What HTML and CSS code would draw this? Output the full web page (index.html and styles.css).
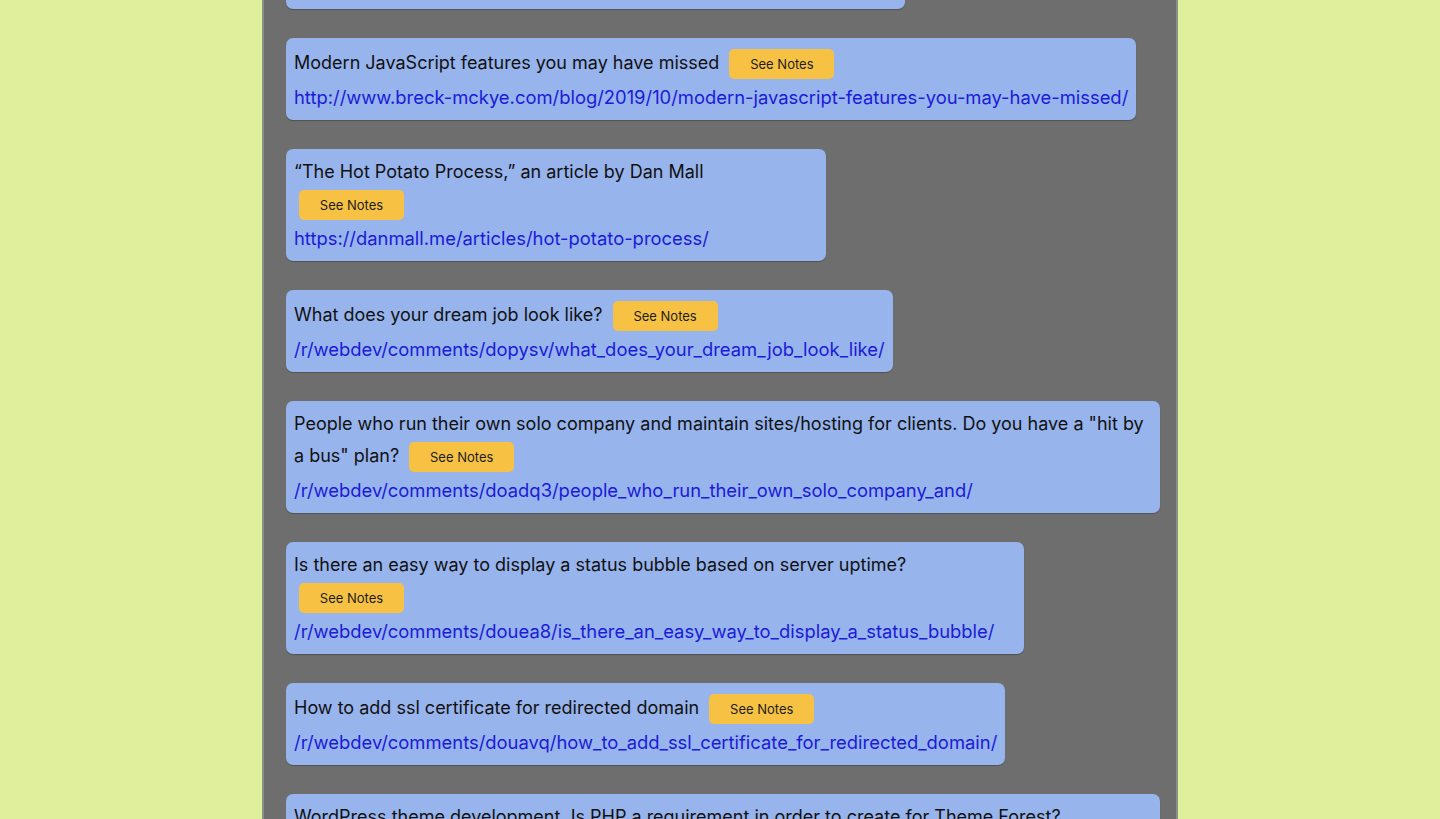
FILE: index.html
```html
<!DOCTYPE html>
<html lang="en">
<head>
<meta charset="utf-8">
<title>Saved links</title>
<link rel="stylesheet" href="styles.css">
</head>
<body>
<div class="page">
  <main class="column">
    <ul class="list">
      <li class="card card--first">
        <div class="title">Ask HN: What are some good resources for learning CSS? <button class="notes">See Notes</button></div>
        <a class="link" href="#">https://news.ycombinator.com/item?id=21252210</a>
      </li>
      <li class="card">
        <div class="title">Modern JavaScript features you may have missed <button class="notes">See Notes</button></div>
        <a class="link" href="#">http://www.breck-mckye.com/blog/2019/10/modern-javascript-features-you-may-have-missed/</a>
      </li>
      <li class="card card--w540">
        <div class="title">“The Hot Potato Process,” an article by Dan Mall <button class="notes">See Notes</button></div>
        <a class="link" href="#">https://danmall.me/articles/hot-potato-process/</a>
      </li>
      <li class="card">
        <div class="title">What does your dream job look like? <button class="notes">See Notes</button></div>
        <a class="link" href="#">/r/webdev/comments/dopysv/what_does_your_dream_job_look_like/</a>
      </li>
      <li class="card">
        <div class="title">People who run their own solo company and maintain sites/hosting for clients. Do you have a "hit by a bus" plan? <button class="notes">See Notes</button></div>
        <a class="link" href="#">/r/webdev/comments/doadq3/people_who_run_their_own_solo_company_and/</a>
      </li>
      <li class="card card--w738">
        <div class="title">Is there an easy way to display a status bubble based on server uptime? <button class="notes">See Notes</button></div>
        <a class="link" href="#">/r/webdev/comments/douea8/is_there_an_easy_way_to_display_a_status_bubble/</a>
      </li>
      <li class="card">
        <div class="title">How to add ssl certificate for redirected domain <button class="notes">See Notes</button></div>
        <a class="link" href="#">/r/webdev/comments/douavq/how_to_add_ssl_certificate_for_redirected_domain/</a>
      </li>
      <li class="card">
        <div class="title">WordPress theme development. Is PHP a requirement in order to create for Theme Forest? <button class="notes">See Notes</button></div>
        <a class="link" href="#">/r/webdev/comments/dou9xk/wordpress_theme_development_is_php_a_requirement/</a>
      </li>
    </ul>
  </main>
</div>
</body>
</html>
```

FILE: styles.css
```css
html, body {
  margin: 0;
  padding: 0;
  height: 100%;
  overflow: hidden;
}

body {
  background: #e0ef9b;
  font-family: Inter, "Noto Sans", "Liberation Sans", sans-serif;
  color: #111111;
}

.page {
  display: flex;
  justify-content: center;
  height: 100%;
}

.column {
  box-sizing: border-box;
  width: 916px;
  height: 100%;
  background: #6e6e6e;
  border-left: 2px solid #8e8e8e;
  border-right: 2px solid #8e8e8e;
  padding-left: 22px;
  overflow: hidden;
}

.list {
  list-style: none;
  margin: -103px 0 0 0;
  padding: 0;
  display: flex;
  flex-direction: column;
  align-items: flex-start;
  gap: 29px;
}

.card {
  box-sizing: border-box;
  max-width: 874px;
  padding: 8px;
  background: #97b4ed;
  border-radius: 7px;
  box-shadow: 0 1px 1px rgba(0, 0, 0, 0.25);
}

.card--first {
  width: 619px;
}

.card--w540 {
  width: 540px;
}

.card--w738 {
  width: 738px;
}

.title {
  font-size: 18px;
  line-height: 30px;
}

.notes {
  box-sizing: border-box;
  width: 105px;
  height: 30px;
  margin: 3px 5px;
  padding: 0;
  border: none;
  border-radius: 5px;
  background: #f7c244;
  color: #1c1c1c;
  font-family: Inter, "Noto Sans", "Liberation Sans", sans-serif;
  font-size: 13px;
  vertical-align: middle;
}

.link {
  display: block;
  font-size: 18.4px;
  line-height: 30px;
  color: #1b1bd8;
  text-decoration: none;
}
```
